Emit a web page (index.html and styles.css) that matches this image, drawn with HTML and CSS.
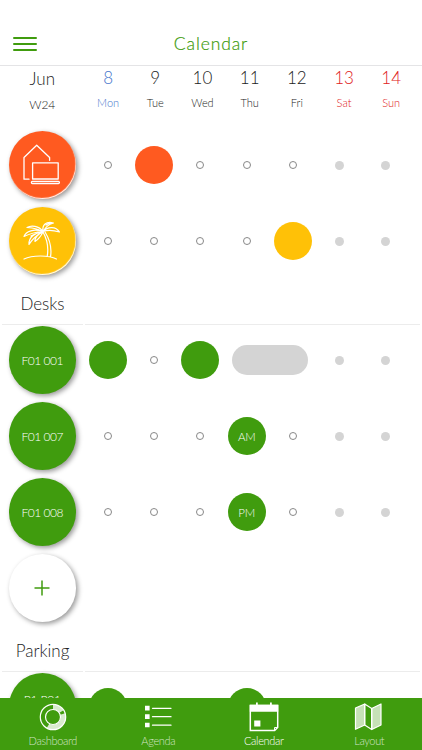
FILE: index.html
```html
<!DOCTYPE html>
<html lang="en">
<head>
<meta charset="utf-8">
<title>Calendar</title>
<link rel="stylesheet" href="styles.css">
</head>
<body>
<div class="app">
  <header class="topbar">
    <button class="menu" aria-label="Menu"><i></i><i></i><i></i></button>
    <h1>Calendar</h1>
  </header>
  <div class="dates">
    <div class="month"><b>Jun</b><span>W24</span></div>
    <div class="date today"><b>8</b><span>Mon</span></div>
    <div class="date"><b>9</b><span>Tue</span></div>
    <div class="date"><b>10</b><span>Wed</span></div>
    <div class="date"><b>11</b><span>Thu</span></div>
    <div class="date"><b>12</b><span>Fri</span></div>
    <div class="date weekend"><b>13</b><span>Sat</span></div>
    <div class="date weekend"><b>14</b><span>Sun</span></div>
  </div>
  <main class="schedule">
    <div class="row">
      <div class="resource home">
        <svg width="68" height="68" viewBox="0 0 68 68" fill="none" stroke="#fff" stroke-width="1.3" stroke-linejoin="round" stroke-linecap="round"><path d="M21 48.2H16V26.5L28.7 14.3 41.6 26.5V29.3"/><path d="M24.6 31.8H50.2V48H24.6Z"/><rect x="23.4" y="50.3" width="28" height="2.2" rx="1"/></svg>
      </div>
      <i class="free"></i><i class="booked home"></i><i class="free"></i><i class="free"></i><i class="free"></i><i class="off"></i><i class="off"></i>
    </div>
    <div class="row">
      <div class="resource leave">
        <svg width="68" height="68" viewBox="0 0 68 68" fill="none" stroke="#fff" stroke-width="1.2" stroke-linejoin="round" stroke-linecap="round"><path d="M16 52C24 48 41 48 48.500 52M35 25C39.500 33 40.500 42 39.200 49.500M37 25C42 33 43.800 42 42.500 49.700"/><path d="M35 24.500C31 18.500 23 18 19 20.500 25 21 30 21.500 35 24.500ZM35 24.500C26 21.500 18 24 16 29.500 22 26.500 28 25 35 24.500ZM34 25C27 26 20.500 30 21 37.500 25 31 29 28 34 25ZM35 25C30 27 26.500 31 27 34.500 31 32 33 29 35 25ZM35 24.500C34 18 38 14 45.500 16 40 17.500 38 20 35 24.500ZM35 24.500C40 19 48 19.500 51.500 25 45 23 40 22.500 35 24.500ZM23 29C28 26 31 25.500 34 25M38 18C40 16.500 43 15.500 45 16"/></svg>
      </div>
      <i class="free"></i><i class="free"></i><i class="free"></i><i class="free"></i><i class="booked leave"></i><i class="off"></i><i class="off"></i>
    </div>
    <h2 class="section"><span>Desks</span></h2>
    <div class="row">
      <div class="resource">F01 001</div>
      <i class="booked"></i><i class="free"></i><i class="booked"></i><i class="unavailable"></i><i class="off"></i><i class="off"></i>
    </div>
    <div class="row">
      <div class="resource">F01 007</div>
      <i class="free"></i><i class="free"></i><i class="free"></i><i class="booked">AM</i><i class="free"></i><i class="off"></i><i class="off"></i>
    </div>
    <div class="row">
      <div class="resource">F01 008</div>
      <i class="free"></i><i class="free"></i><i class="free"></i><i class="booked">PM</i><i class="free"></i><i class="off"></i><i class="off"></i>
    </div>
    <div class="row">
      <div class="resource add"><svg width="16" height="16" viewBox="0 0 16 16" stroke="#409c0e" stroke-width="1.5"><path d="M8 .5V15.500M.5 8H15.500"/></svg></div>
    </div>
    <h2 class="section"><span>Parking</span></h2>
    <div class="row">
      <div class="resource parking">P1 P01</div>
      <i class="booked"></i><i></i><i></i><i class="booked"></i>
    </div>
  </main>
  <nav class="tabs">
    <a class="tab">
      <svg width="30" height="30" viewBox="0 0 30 30" fill="none" stroke="#fff"><circle cx="15" cy="15" r="12.700" stroke-width="1.200"/><circle cx="15" cy="15" r="7.500" stroke-width="1.200"/><path d="M15 4.900A10.100 10.100 0 0 1 23.500 9.500M24.700 12A10.100 10.100 0 0 1 10 23.800" stroke-width="5" opacity=".8"/></svg>
      <span>Dashboard</span>
    </a>
    <a class="tab">
      <svg width="30" height="30" viewBox="0 0 30 30" fill="#fff"><path d="M2 3.800h4.600v4.600H2zM2 12.300h4.600v4.600H2zM2 20.700h4.600v4.600H2z"/><path d="M9.500 6.300H28M9.500 14.700H28M9.500 23.200H28" stroke="#fff" stroke-width="1.300" stroke-linecap="round"/></svg>
      <span>Agenda</span>
    </a>
    <a class="tab active">
      <svg width="30" height="30" viewBox="0 0 30 30" fill="none" stroke="#fff" stroke-width="1.500"><path d="M1.300 3.500H28.700V25.500L25.700 28.500H1.300Z"/><path d="M.8 2.800H29.200V9.800H.8ZM7 .5h1.800v3H7zM21 .5h1.800v3H21zM5.200 18.500h6.200v6H5.200z" fill="#fff" stroke="none"/><path d="M25.500 28V25.500H28.500" stroke-width="1"/></svg>
      <span>Calendar</span>
    </a>
    <a class="tab">
      <svg width="30" height="30" viewBox="0 0 30 30" stroke="#fff" stroke-width="1.200" stroke-linejoin="round"><path d="M1.500 6 10.700 2V23L1.500 27.300ZM17.700 6.500 27 2V23L17.700 27.500Z" fill="rgba(255,255,255,.7)"/><path d="M10.700 2 17.700 6.500V27.500L10.700 23Z" fill="none"/></svg>
      <span>Layout</span>
    </a>
  </nav>
</div>
</body>
</html>
```
FILE: styles.css
```css
*, ::after { box-sizing: border-box; }
body { margin: 0; background: #fff; color: #222; font-family: Lato, "Liberation Sans", sans-serif; font-weight: 300; }
.app { display: flex; flex-direction: column; height: 750px; overflow: hidden; }
.topbar { flex: none; display: grid; grid-template-columns: 50px 1fr 50px; align-items: center; height: 66px; padding-top: 22px; border-bottom: 1px solid #e4e4e6; }
.menu { display: flex; flex-direction: column; gap: 4px; padding: 0; margin-left: 13px; border: 0; background: none; }
.menu i { width: 24px; height: 2px; border-radius: 1px; background: #409c0e; }
h1 { margin: 0; text-align: center; font-size: 17.500px; line-height: 24px; font-weight: 300; letter-spacing: .9px; color: #409c0e; -webkit-text-stroke: .2px #409c0e; }
.dates { flex: none; display: grid; grid-template-columns: 84.500px repeat(7, 47.200px); height: 61px; text-align: center; }
.dates b { display: block; font-weight: 300; font-size: 17px; line-height: 24px; }
.dates span { display: block; font-size: 11px; line-height: 16px; margin-top: 5px; }
.dates .month b { line-height: 26px; }
.dates .month span { font-size: 12px; margin-top: 5px; }
.today { color: #4776cc; }
.weekend { color: #e02020; }
.schedule { flex: 1; min-height: 0; overflow: hidden; }
.row { display: grid; grid-template-columns: 84.500px repeat(7, 46.350px); align-items: center; justify-items: center; height: 76px; }
.row i { font-style: normal; }
.resource { display: flex; align-items: center; justify-content: center; width: 67.500px; height: 67.500px; border-radius: 50%; background: #409c0e; color: #fff; font-size: 12px; letter-spacing: -.5px; box-shadow: 2px 2px 5px rgba(0, 0, 0, .4); }
.resource.home, .resource.leave { box-shadow: inset -.5px -1px 1px #fff, 2px 2px 5px rgba(0, 0, 0, .4); }
.resource.parking { padding-bottom: 15px; letter-spacing: -.2px; }
.resource svg { flex: none; }
.booked { display: flex; align-items: center; justify-content: center; width: 38px; height: 38px; border-radius: 50%; background: #409c0e; color: #fff; font-size: 11.500px; letter-spacing: -.2px; }
.home { background: #ff5a20; }
.leave { background: #ffc107; }
.resource.add { background: #fff; }
.free { width: 8px; height: 8px; border: 1px solid #888; border-radius: 50%; }
.off { width: 9px; height: 9px; border-radius: 50%; background: #d4d4d4; }
.unavailable { grid-column: span 2; width: 76px; height: 30px; border-radius: 15px; background: #d4d4d4; }
.section { display: grid; grid-template-columns: 81px 1fr; column-gap: 2px; height: 46px; margin: 0 2px -3px; font-size: 17px; line-height: 40px; font-weight: 300; text-align: center; }
.section::after { content: ""; }
.section span { padding-top: 5px; }
.section span, .section::after { height: 46px; border-bottom: 1px solid #ececec; }
.tabs { flex: none; position: relative; display: grid; grid-template-columns: repeat(4, 1fr); height: 52px; background: #409c0e; }
.tab { display: flex; flex-direction: column; align-items: center; padding-top: 4px; color: rgba(255, 255, 255, .75); font-size: 11px; letter-spacing: -.35px; line-height: 14px; }
.tab span { margin-top: 2px; }
.tab.active { color: #fff; }
```
